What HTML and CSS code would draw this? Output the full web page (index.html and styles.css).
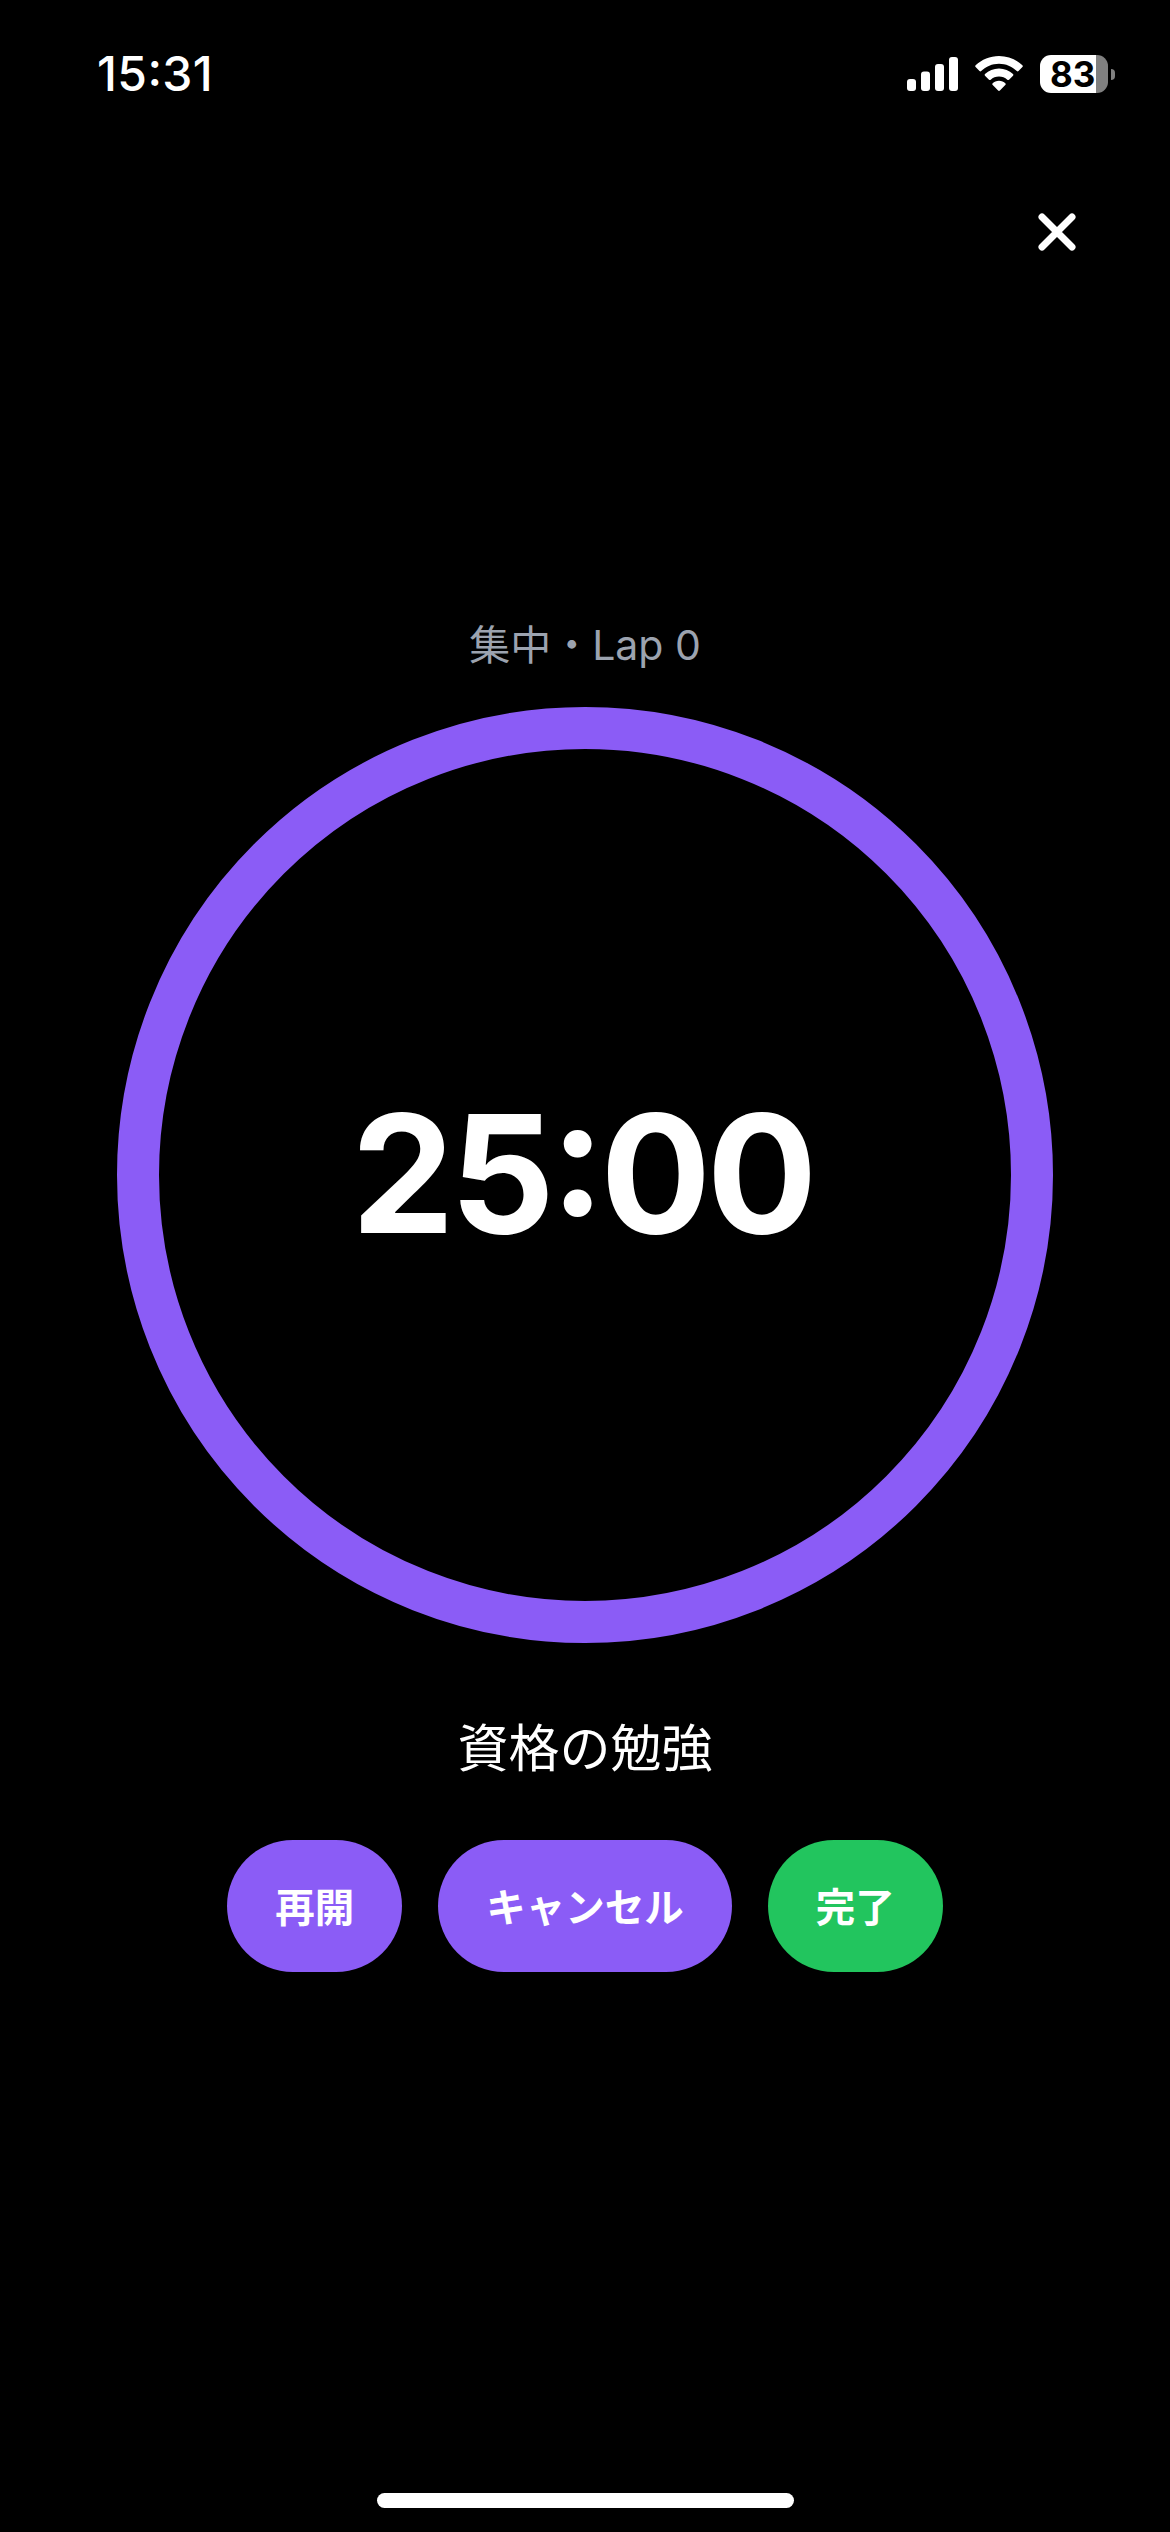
FILE: index.html
```html
<!DOCTYPE html>
<html lang="ja">
<head>
<meta charset="utf-8">
<title>集中タイマー</title>
<link rel="stylesheet" href="styles.css">
</head>
<body>
<div class="screen">
  <header class="status-bar">
    <span class="clock">15:31</span>
    <div class="status-icons">
      <svg class="signal" viewBox="0 0 51 34" aria-hidden="true">
        <rect x="0" y="22" width="9" height="12" rx="3"/>
        <rect x="14" y="14.500" width="9" height="19.500" rx="3"/>
        <rect x="28" y="7" width="9" height="27" rx="3"/>
        <rect x="42" y="0" width="9" height="34" rx="3"/>
      </svg>
      <svg class="wifi" viewBox="0 0 48 35" aria-hidden="true">
        <path d="M24 0C15 0 6.800 3.500 0.600 9.300c-0.500 0.500-0.500 1.200 0 1.700l3.900 4c0.500 0.500 1.200 0.500 1.700 0C11 10.500 17.200 7.700 24 7.700s13 2.800 17.800 7.300c0.500 0.500 1.200 0.500 1.700 0l3.900-4c0.500-0.500 0.500-1.200 0-1.700C41.200 3.500 33 0 24 0z"/>
        <path d="M24 12.500c-5.400 0-10.300 2.100-14 5.500-0.500 0.500-0.500 1.200 0 1.700l4 4c0.500 0.500 1.200 0.500 1.700 0.100 2.200-2 5.100-3.200 8.300-3.200s6.100 1.200 8.300 3.200c0.500 0.400 1.200 0.400 1.700-0.100l4-4c0.500-0.500 0.500-1.200 0-1.700-3.700-3.400-8.600-5.500-14-5.500z"/>
        <path d="M24 24.800c-2.500 0-4.800 1-6.500 2.600-0.400 0.400-0.400 1 0 1.400l5.600 5.800c0.500 0.500 1.300 0.500 1.800 0l5.600-5.800c0.400-0.400 0.400-1 0-1.400-1.700-1.600-4-2.600-6.500-2.600z"/>
      </svg>
      <div class="battery">
        <div class="battery-body">83</div>
        <span class="battery-tip"></span>
      </div>
    </div>
  </header>

  <div class="toolbar">
    <button class="close" type="button" aria-label="閉じる">
      <svg viewBox="0 0 38 38" aria-hidden="true">
        <path d="M4 4L34 34M34 4L4 34"/>
      </svg>
    </button>
  </div>

  <main class="timer">
    <p class="phase">集中・Lap 0</p>
    <div class="ring">
      <span class="time">25:00</span>
    </div>
    <p class="task">資格の勉強</p>
    <div class="actions">
      <button class="pill" type="button">再開</button>
      <button class="pill" type="button">キャンセル</button>
      <button class="pill pill-done" type="button">完了</button>
    </div>
  </main>

  <div class="home-indicator"></div>
</div>
</body>
</html>
```

FILE: styles.css
```css
* {
  box-sizing: border-box;
}

html,
body {
  margin: 0;
  background: #000;
}

.screen {
  width: 1170px;
  height: 2532px;
  display: flex;
  flex-direction: column;
  background: #000;
  color: #fff;
  font-family: Inter, "Noto Sans CJK JP", sans-serif;
  overflow: hidden;
}

/* Status bar */
.status-bar {
  height: 132px;
  padding: 55px 55px 0 97px;
  display: flex;
  justify-content: space-between;
  align-items: flex-start;
}

.clock {
  font-size: 48px;
  font-weight: 500;
  line-height: 38px;
  letter-spacing: 0.4px;
  font-feature-settings: "case";
}

.status-icons {
  display: flex;
  align-items: flex-start;
  gap: 17px;
}

.signal {
  display: block;
  width: 51px;
  height: 34px;
  margin-top: 2px;
  fill: #fff;
}

.wifi {
  display: block;
  width: 48px;
  height: 35px;
  margin-top: 1px;
  fill: #fff;
}

.battery {
  display: flex;
  align-items: center;
  gap: 3px;
}

.battery-body {
  width: 68px;
  height: 38px;
  border-radius: 11px;
  background: linear-gradient(to right, #fff 82%, #808080 82%);
  color: #000;
  font-size: 35px;
  font-weight: 700;
  line-height: 38px;
  padding-left: 10px;
}

.battery-tip {
  width: 4px;
  height: 11px;
  border-radius: 0 4px 4px 0;
  background: #808080;
}

/* Close button */
.toolbar {
  display: flex;
  justify-content: flex-end;
  padding: 81px 94px 0 0;
}

.close {
  width: 38px;
  height: 38px;
  padding: 0;
  border: 0;
  background: none;
}

.close svg {
  display: block;
  width: 38px;
  height: 38px;
  fill: none;
  stroke: #fff;
  stroke-width: 7;
  stroke-linecap: round;
}

/* Timer column */
.timer {
  display: flex;
  flex-direction: column;
  align-items: center;
  padding-top: 368px;
}

.phase {
  margin: 0;
  font-size: 41px;
  line-height: 52px;
  color: #9ca3af;
}

.ring {
  width: 936px;
  height: 936px;
  margin-top: 36px;
  border: 42px solid #8b5cf6;
  border-radius: 50%;
  display: flex;
  align-items: center;
  justify-content: center;
}

.time {
  padding: 0 6px 3px 0;
  font-size: 164px;
  font-weight: 700;
  line-height: 1;
  letter-spacing: -4.500px;
  font-feature-settings: "case";
}

.task {
  margin: 70px 0 0;
  font-size: 51px;
  line-height: 72px;
}

.actions {
  display: flex;
  gap: 36px;
  margin-top: 55px;
}

.pill {
  height: 132px;
  padding: 0 48px 4px;
  border: 0;
  border-radius: 66px;
  background: #8b5cf6;
  color: #fff;
  font-family: inherit;
  font-size: 39.5px;
  font-weight: 700;
}

.pill-done {
  background: #22c55e;
}

/* Home indicator */
.home-indicator {
  width: 417px;
  height: 15px;
  margin: auto auto 24px;
  border-radius: 8px;
  background: #fff;
}
```
